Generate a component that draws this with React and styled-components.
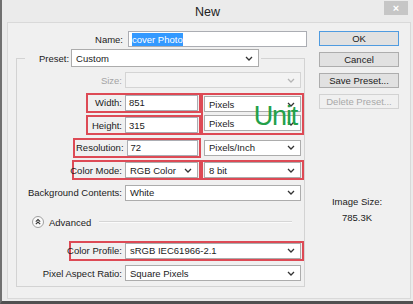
import React from "react";
import styled, { createGlobalStyle } from "styled-components";

const GlobalStyle = createGlobalStyle`
  html, body {
    margin: 0;
    padding: 0;
    background: #ebebeb;
  }
  body {
    font-family: "Liberation Sans", Arial, sans-serif;
  }
`;

const Window = styled.div`
  width: 413px;
  height: 304px;
  box-sizing: border-box;
  background: #ebebeb;
  border-left: 2px solid #707070;
  border-bottom: 3px solid #505050;
  display: flex;
  flex-direction: column;
  font-size: 9.5px;
  color: #1b1b1b;
`;

const TitleBar = styled.div`
  height: 22px;
  flex: none;
  display: grid;
  grid-template-columns: 1fr auto 1fr;
  align-items: center;
`;

const Title = styled.div`
  grid-column: 2;
  font-size: 12.5px;
  color: #222;
  padding-top: 2px;
`;

const CloseButton = styled.div`
  grid-column: 3;
  justify-self: end;
  align-self: start;
  margin: 1px 5px 0 0;
  width: 24px;
  height: 14px;
  background: #c6c6c6;
  color: #fff;
  font-size: 11px;
  font-weight: bold;
  display: flex;
  align-items: center;
  justify-content: center;
`;

const Panel = styled.div`
  flex: 1;
  margin: 0 2px 2px 5px;
  border: 1px solid #d9d9d9;
  background: #f0f0f0;
  display: grid;
  grid-template-columns: 303px 1fr;
`;

const LeftColumn = styled.div`
  padding-top: 8px;
  display: flex;
  flex-direction: column;
`;

const NameRow = styled.div`
  display: grid;
  grid-template-columns: 115px 179px;
  column-gap: 5px;
  align-items: center;
`;

const Label = styled.span`
  text-align: right;
  white-space: nowrap;
  color: ${(p) => (p.$disabled ? "#a3a3a3" : "#1b1b1b")};
`;

const TextInput = styled.div`
  box-sizing: border-box;
  height: 16px;
  width: ${(p) => p.$w || "auto"};
  background: #fff;
  border: 1px solid #abadb3;
  padding: 0 3px;
  display: flex;
  align-items: center;
  white-space: nowrap;
`;

const Selected = styled.span`
  background: #3399ff;
  color: #fff;
  padding: 1px 0;
`;

const SelectBox = styled.div`
  box-sizing: border-box;
  height: ${(p) => p.$h || "16px"};
  width: ${(p) => p.$w};
  flex: none;
  background: ${(p) => (p.$disabled ? "#f3f3f3" : "#fff")};
  border: 1px solid ${(p) => (p.$disabled ? "#d4d4d4" : "#acacac")};
  padding: 0 5px 0 4px;
  display: flex;
  align-items: center;
  justify-content: space-between;
  white-space: nowrap;
`;

const Fieldset = styled.fieldset`
  margin: 2px 0 0 8px;
  width: 289px;
  box-sizing: border-box;
  min-width: 0;
  border: 1px solid #d3d3d3;
  padding: 3px 0 3px 0;
  display: flex;
  flex-direction: column;
  gap: 2.5px;
`;

const Legend = styled.legend`
  margin-left: 8px;
  padding: 0 2px 0 14px;
  display: flex;
  align-items: center;
  gap: 2px;
`;

const Row = styled.div`
  display: flex;
  justify-content: flex-end;
  align-items: center;
`;

const Box = styled.div`
  box-sizing: border-box;
  height: 20px;
  width: ${(p) => p.$w || "auto"};
  flex: ${(p) => (p.$w ? "none" : "1")};
  border: 2px solid ${(p) => (p.$on ? "#dd4a55" : "transparent")};
  padding: 0 1px;
  display: flex;
  align-items: center;
  justify-content: flex-end;
  gap: 3px;
`;

const UnitGroup = styled.div`
  position: relative;
  display: grid;
  grid-template-columns: 115px 103px;
  grid-template-rows: 20px 20px;
  justify-content: end;
  row-gap: 2.5px;
`;

const UnitsBox = styled.div`
  grid-column: 2;
  grid-row: 1 / span 2;
  box-sizing: border-box;
  border: 2px solid #dd4a55;
  padding: 0 1px;
  display: flex;
  flex-direction: column;
  justify-content: space-around;
`;

const UnitNote = styled.span`
  position: absolute;
  right: 7px;
  top: 10px;
  font-size: 27px;
  line-height: 1;
  letter-spacing: -1.2px;
  color: #22a049;
  pointer-events: none;
`;

const AdvancedRow = styled.div`
  display: flex;
  align-items: center;
  height: 12px;
  padding: 0 12px 0 15px;
  gap: 5px;
  margin: 11px 0 10px;
`;

const Rule = styled.div`
  flex: 1;
  margin-left: 3px;
  border-top: 1px solid #d6d6d6;
  border-bottom: 1px solid #fbfbfb;
`;

const RightColumn = styled.div`
  padding: 8px 0 0 8px;
  display: flex;
  flex-direction: column;
  align-items: flex-start;
  gap: 6px;
`;

const Button = styled.div`
  box-sizing: border-box;
  width: 80px;
  height: 15px;
  display: flex;
  align-items: center;
  justify-content: center;
  background: ${(p) => (p.$disabled ? "#f0f0f0" : "#e1e1e1")};
  border: 1px solid
    ${(p) => (p.$primary ? "#4f9be0" : p.$disabled ? "#d2d2d2" : "#adadad")};
  color: ${(p) => (p.$disabled ? "#a8a8a8" : "#1b1b1b")};
`;

const ImageSize = styled.div`
  margin-top: 79px;
  width: 76px;
  text-align: center;
  line-height: 16px;
`;

const Chevron = ({ light }) => (
  <svg width="8" height="5" viewBox="0 0 8 5">
    <polyline
      points="1,1 4,4 7,1"
      fill="none"
      stroke={light ? "#b5b5b5" : "#333"}
      strokeWidth="1.3"
    />
  </svg>
);

const AdvancedIcon = () => (
  <svg width="12" height="12" viewBox="0 0 12 12">
    <circle cx="6" cy="6" r="5.5" fill="#fafafa" stroke="#9f9f9f" />
    <polyline points="3.8,5.6 6,3.6 8.2,5.6" fill="none" stroke="#333" strokeWidth="1.1" />
    <polyline points="3.8,8.1 6,6.1 8.2,8.1" fill="none" stroke="#333" strokeWidth="1.1" />
  </svg>
);

function Select({ value, w, h, disabled }) {
  return (
    <SelectBox $w={w} $h={h} $disabled={disabled}>
      <span>{value}</span>
      <Chevron light={disabled} />
    </SelectBox>
  );
}

export default function App() {
  return (
    <>
      <GlobalStyle />
      <Window>
        <TitleBar>
          <Title>New</Title>
          <CloseButton>×</CloseButton>
        </TitleBar>
        <Panel>
          <LeftColumn>
            <NameRow>
              <Label>Name:</Label>
              <TextInput>
                <Selected>cover Photo</Selected>
              </TextInput>
            </NameRow>

            <Fieldset>
              <Legend>
                <Label>Preset:</Label>
                <Select value="Custom" w="188px" h="18px" />
              </Legend>

              <Row>
                <Box>
                  <Label $disabled>Size:</Label>
                  <Select value="" w="176px" disabled />
                </Box>
              </Row>

              <UnitGroup>
                <Box $on $w="115px">
                  <Label>Width:</Label>
                  <TextInput $w="73px">851</TextInput>
                </Box>
                <UnitsBox>
                  <Select value="Pixels" w="97px" />
                  <Select value="Pixels" w="97px" />
                </UnitsBox>
                <Box $on $w="115px">
                  <Label>Height:</Label>
                  <TextInput $w="73px">315</TextInput>
                </Box>
                <UnitNote>Unit</UnitNote>
              </UnitGroup>

              <Row>
                <Box $on $w="128px">
                  <Label>Resolution:</Label>
                  <TextInput $w="73px">72</TextInput>
                </Box>
                <Box $w="103px">
                  <Select value="Pixels/Inch" w="97px" />
                </Box>
              </Row>

              <Row>
                <Box $on $w="129px">
                  <Label>Color Mode:</Label>
                  <Select value="RGB Color" w="73px" />
                </Box>
                <Box $on $w="103px">
                  <Select value="8 bit" w="97px" />
                </Box>
              </Row>

              <Row>
                <Box>
                  <Label>Background Contents:</Label>
                  <Select value="White" w="176px" />
                </Box>
              </Row>

              <AdvancedRow>
                <AdvancedIcon />
                <span>Advanced</span>
                <Rule />
              </AdvancedRow>

              <Row>
                <Box $on $w="235px">
                  <Label>Color Profile:</Label>
                  <Select value="sRGB IEC61966-2.1" w="176px" />
                </Box>
              </Row>

              <Row>
                <Box>
                  <Label>Pixel Aspect Ratio:</Label>
                  <Select value="Square Pixels" w="176px" />
                </Box>
              </Row>
            </Fieldset>
          </LeftColumn>

          <RightColumn>
            <Button $primary>OK</Button>
            <Button>Cancel</Button>
            <Button>Save Preset...</Button>
            <Button $disabled>Delete Preset...</Button>
            <ImageSize>
              Image Size:
              <br />
              785.3K
            </ImageSize>
          </RightColumn>
        </Panel>
      </Window>
    </>
  );
}
